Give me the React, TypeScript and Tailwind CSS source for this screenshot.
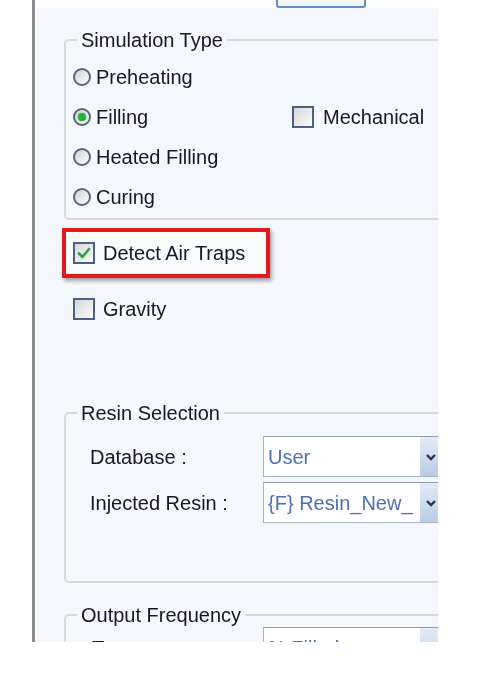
import type { ReactNode } from 'react';

function Radio({ checked }: { checked?: boolean }) {
  return (
    <span className="w-[18px] h-[18px] rounded-full border-[2px] border-[#56677f] bg-linear-to-br from-[#d4d4d4] to-[#fbfbfb] flex items-center justify-center shrink-0">
      {checked && <span className="w-[8px] h-[8px] rounded-full bg-[#27b23c] shadow-[0_0_2px_#4ccf5c]" />}
    </span>
  );
}

function Check({ checked }: { checked?: boolean }) {
  return (
    <span className="w-[22px] h-[22px] border-[2px] border-[#4a6183] bg-linear-to-br from-[#d8d8d8] to-[#fafafa] flex items-center justify-center shrink-0">
      {checked && (
        <svg width="16" height="16" viewBox="0 0 16 16">
          <path d="M3 8.5 L6.5 12 L13 4" fill="none" stroke="#23a83a" strokeWidth="2.6" strokeLinecap="round" strokeLinejoin="round" />
        </svg>
      )}
    </span>
  );
}

function Combo({ value }: { value: string }) {
  return (
    <div className="w-[200px] h-[41px] border border-[#a7b3c3] border-t-[#8e9cb1] bg-white flex shrink-0">
      <div className="w-[156px] pl-[4px] flex items-center text-[#4b6fb4] whitespace-nowrap overflow-hidden">{value}</div>
      <div className="w-[22px] bg-linear-to-b from-[#e3ecf7] to-[#b9cce5] flex items-center justify-center">
        <svg width="12" height="10" viewBox="0 0 12 10">
          <path d="M2 3 L6 7 L10 3" fill="none" stroke="#27364f" strokeWidth="2.4" />
        </svg>
      </div>
    </div>
  );
}

function Group({ title, className, children }: { title: string; className?: string; children: ReactNode }) {
  return (
    <fieldset className={`ml-[27px] w-[420px] border-[2px] border-[#d7dadb] rounded-[5px] px-0 ${className ?? ''}`}>
      <legend className="ml-[11px] px-[4px] leading-[22px]">{title}</legend>
      {children}
    </fieldset>
  );
}

export default function App() {
  const radios = ['Preheating', 'Filling', 'Heated Filling', 'Curing'];

  return (
    <div className="w-[483px] h-[698px] bg-white overflow-hidden font-['Liberation_Sans',Arial,sans-serif] text-[20px] text-[#15172a]">
      <div className="ml-[32px] w-[406px] h-[642px] border-l-[3px] border-[#8a8a8a] pl-[2px] flex flex-col blur-[0.4px]">
        <div className="h-[8px] shrink-0">
          <div className="ml-[239px] w-[90px] h-[8px] border-x-2 border-b-2 border-[#5d8fcf] rounded-b-[3px] bg-[#f3f8fd]" />
        </div>

        <div className="flex-1 bg-[#f4f7fb] overflow-hidden pt-[21px]">
          <Group title="Simulation Type" className="pt-[6px] pb-[1px]">
            {radios.map((r, i) => (
              <div key={r} className="h-[40px] flex items-center pl-[7px]">
                <div className="w-[219px] flex items-center gap-[5px]">
                  <Radio checked={i === 1} />
                  <span>{r}</span>
                </div>
                {i === 1 && (
                  <div className="flex items-center gap-[9px]">
                    <Check />
                    <span>Mechanical</span>
                  </div>
                )}
              </div>
            ))}
          </Group>

          <div className="mt-[8px] ml-[25px] w-[208px] h-[50px] border-[4px] border-[#e3191c] bg-[#f8fafc] shadow-[2px_3px_4px_rgba(0,0,0,0.35)] flex items-center pl-[7px] gap-[8px]">
            <Check checked />
            <span>Detect Air Traps</span>
          </div>

          <div className="mt-[19px] ml-[36px] h-[24px] flex items-center gap-[8px]">
            <Check />
            <span>Gravity</span>
          </div>

          <Group title="Resin Selection" className="mt-[81px] pt-[12px] pb-[58px]">
            <div className="flex flex-col gap-[5px]">
              <div className="flex items-center pl-[24px]">
                <span className="w-[173px] shrink-0">Database :</span>
                <Combo value="User" />
              </div>
              <div className="flex items-center pl-[24px]">
                <span className="w-[173px] shrink-0">Injected Resin :</span>
                <Combo value="{F} Resin_New_" />
              </div>
            </div>
          </Group>

          <Group title="Output Frequency" className="mt-[21px] pt-[1px] pb-[20px]">
            <div className="flex items-center pl-[26px]">
              <span className="w-[171px] shrink-0">Type :</span>
              <Combo value="% Filled" />
            </div>
          </Group>
        </div>
      </div>
    </div>
  );
}
